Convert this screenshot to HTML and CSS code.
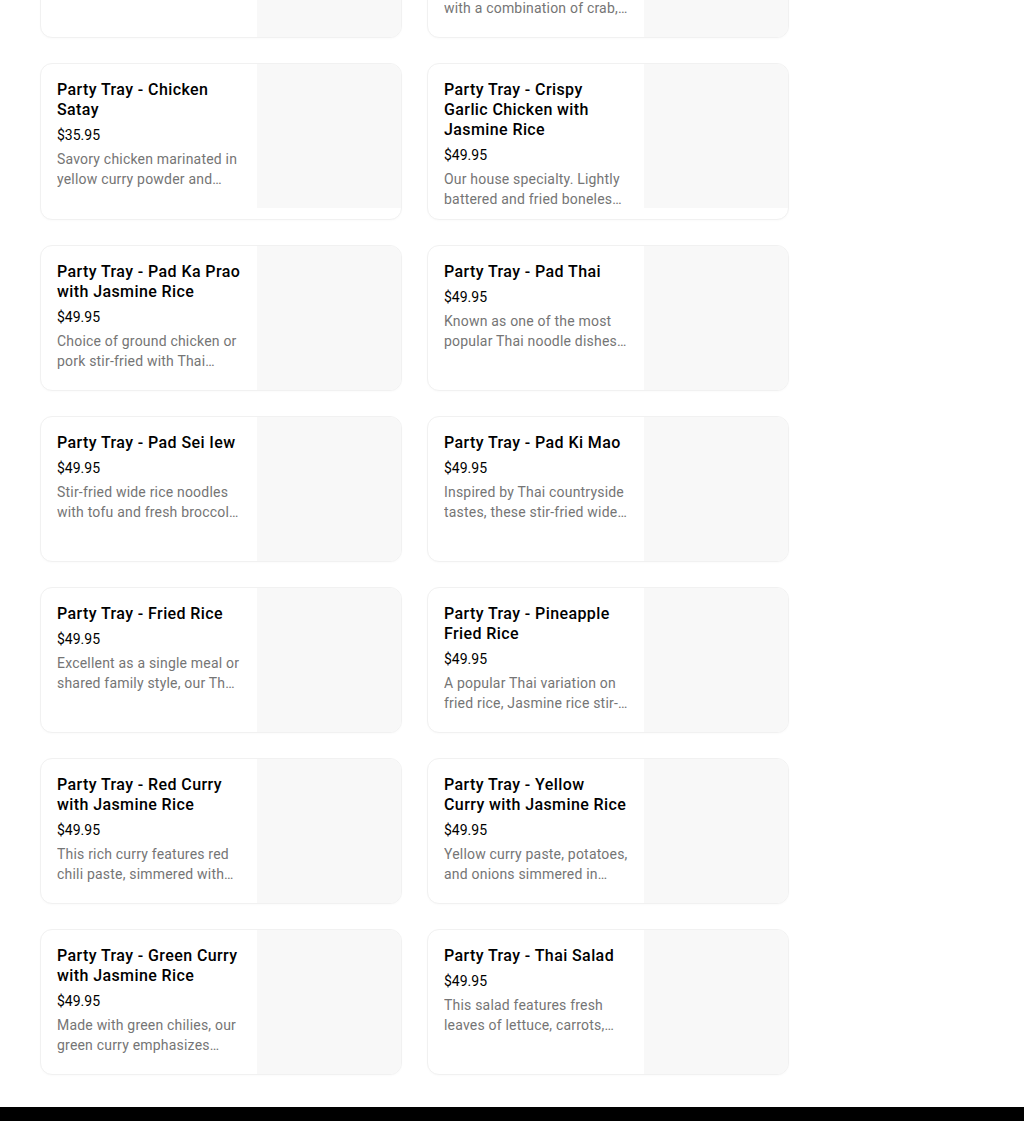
FILE: index.html
```html
<!DOCTYPE html>
<html lang="en">
<head>
<meta charset="utf-8">
<title>Party Trays</title>
<link rel="stylesheet" href="styles.css">
</head>
<body>
<main class="menu">
  <div class="grid">
    <div class="card">
      <div class="info">
        <h3 class="name">Party Tray - Spring Rolls</h3>
        <div class="price">$35.95</div>
        <p class="desc">Crispy rolls stuffed with cabbage, carrots, glass noodles and taro, served with sweet chili sauce.</p>
      </div>
      <div class="thumb"></div>
    </div>
    <div class="card">
      <div class="info">
        <h3 class="name">Party Tray - Crab Rangoon Wontons</h3>
        <div class="price">$35.95</div>
        <p class="desc">Crispy wonton skins filled with a combination of crab, cream cheese and green onions.</p>
      </div>
      <div class="thumb"></div>
    </div>

    <div class="card">
      <div class="info">
        <h3 class="name">Party Tray - Chicken Satay</h3>
        <div class="price">$35.95</div>
        <p class="desc">Savory chicken marinated in yellow curry powder and coconut milk, grilled on skewers and served with peanut sauce.</p>
      </div>
      <div class="thumb"></div>
    </div>
    <div class="card">
      <div class="info">
        <h3 class="name">Party Tray - Crispy Garlic Chicken with Jasmine Rice</h3>
        <div class="price">$49.95</div>
        <p class="desc">Our house specialty. Lightly battered and fried boneless chicken topped with crispy garlic and pepper.</p>
      </div>
      <div class="thumb"></div>
    </div>

    <div class="card">
      <div class="info">
        <h3 class="name">Party Tray - Pad Ka Prao with Jasmine Rice</h3>
        <div class="price">$49.95</div>
        <p class="desc">Choice of ground chicken or pork stir-fried with Thai basil, chili, garlic and onions.</p>
      </div>
      <div class="thumb"></div>
    </div>
    <div class="card">
      <div class="info">
        <h3 class="name">Party Tray - Pad Thai</h3>
        <div class="price">$49.95</div>
        <p class="desc">Known as one of the most popular Thai noodle dishes, rice noodles stir-fried with egg, tofu and bean sprouts.</p>
      </div>
      <div class="thumb"></div>
    </div>

    <div class="card">
      <div class="info">
        <h3 class="name">Party Tray - Pad Sei Iew</h3>
        <div class="price">$49.95</div>
        <p class="desc">Stir-fried wide rice noodles with tofu and fresh broccoli in a sweet soy sauce.</p>
      </div>
      <div class="thumb"></div>
    </div>
    <div class="card">
      <div class="info">
        <h3 class="name">Party Tray - Pad Ki Mao</h3>
        <div class="price">$49.95</div>
        <p class="desc">Inspired by Thai countryside tastes, these stir-fried wide rice noodles are tossed with basil and chili.</p>
      </div>
      <div class="thumb"></div>
    </div>

    <div class="card">
      <div class="info">
        <h3 class="name">Party Tray - Fried Rice</h3>
        <div class="price">$49.95</div>
        <p class="desc">Excellent as a single meal or shared family style, our Thai fried rice is stir-fried with egg and onions.</p>
      </div>
      <div class="thumb"></div>
    </div>
    <div class="card">
      <div class="info">
        <h3 class="name">Party Tray - Pineapple Fried Rice</h3>
        <div class="price">$49.95</div>
        <p class="desc">A popular Thai variation on fried rice, Jasmine rice stir-fried with pineapple, cashews and raisins.</p>
      </div>
      <div class="thumb"></div>
    </div>

    <div class="card">
      <div class="info">
        <h3 class="name">Party Tray - Red Curry with Jasmine Rice</h3>
        <div class="price">$49.95</div>
        <p class="desc">This rich curry features red chili paste, simmered with coconut milk, bamboo shoots and basil.</p>
      </div>
      <div class="thumb"></div>
    </div>
    <div class="card">
      <div class="info">
        <h3 class="name">Party Tray - Yellow Curry with Jasmine Rice</h3>
        <div class="price">$49.95</div>
        <p class="desc">Yellow curry paste, potatoes, and onions simmered in coconut milk.</p>
      </div>
      <div class="thumb"></div>
    </div>

    <div class="card">
      <div class="info">
        <h3 class="name">Party Tray - Green Curry with Jasmine Rice</h3>
        <div class="price">$49.95</div>
        <p class="desc">Made with green chilies, our green curry emphasizes sweet basil and coconut milk.</p>
      </div>
      <div class="thumb"></div>
    </div>
    <div class="card">
      <div class="info">
        <h3 class="name">Party Tray - Thai Salad</h3>
        <div class="price">$49.95</div>
        <p class="desc">This salad features fresh leaves of lettuce, carrots, cucumbers and tomatoes with peanut dressing.</p>
      </div>
      <div class="thumb"></div>
    </div>
  </div>
</main>
<footer class="footer"></footer>
</body>
</html>
```

FILE: styles.css
```css
* { box-sizing: border-box; }

html, body {
  margin: 0;
  padding: 0;
  background: #ffffff;
}

body {
  font-family: Roboto, "Liberation Sans", Arial, sans-serif;
  color: #000000;
  overflow: hidden;
}

.menu {
  padding: 0 0 0 40px;
  margin-top: -108px;
}

.grid {
  display: grid;
  grid-template-columns: repeat(2, 362px);
  column-gap: 25px;
  row-gap: 25px;
}

.card {
  display: flex;
  align-items: flex-start;
  border: 1px solid #f1f1f1;
  border-radius: 12px;
  overflow: hidden;
  background: #ffffff;
  box-shadow: 0 1px 2px rgba(0, 0, 0, 0.02);
}

.info {
  flex: 1;
  min-width: 0;
  padding: 16px 16px 10px 16px;
}

.name {
  margin: 0;
  font-size: 16px;
  line-height: 20px;
  font-weight: 500;
  letter-spacing: 0.4px;
  color: #000000;
}

.price {
  margin-top: 5px;
  font-size: 14px;
  line-height: 20px;
  color: #000000;
}

.desc {
  margin: 4px 0 0 0;
  font-size: 14px;
  line-height: 20px;
  letter-spacing: 0.2px;
  color: #757575;
  display: -webkit-box;
  -webkit-line-clamp: 2;
  -webkit-box-orient: vertical;
  overflow: hidden;
}

.thumb {
  flex: 0 0 144px;
  width: 144px;
  height: 144px;
  background: #f8f8f8;
}

.footer {
  margin-top: 32px;
  height: 300px;
  background: #000000;
}
```
